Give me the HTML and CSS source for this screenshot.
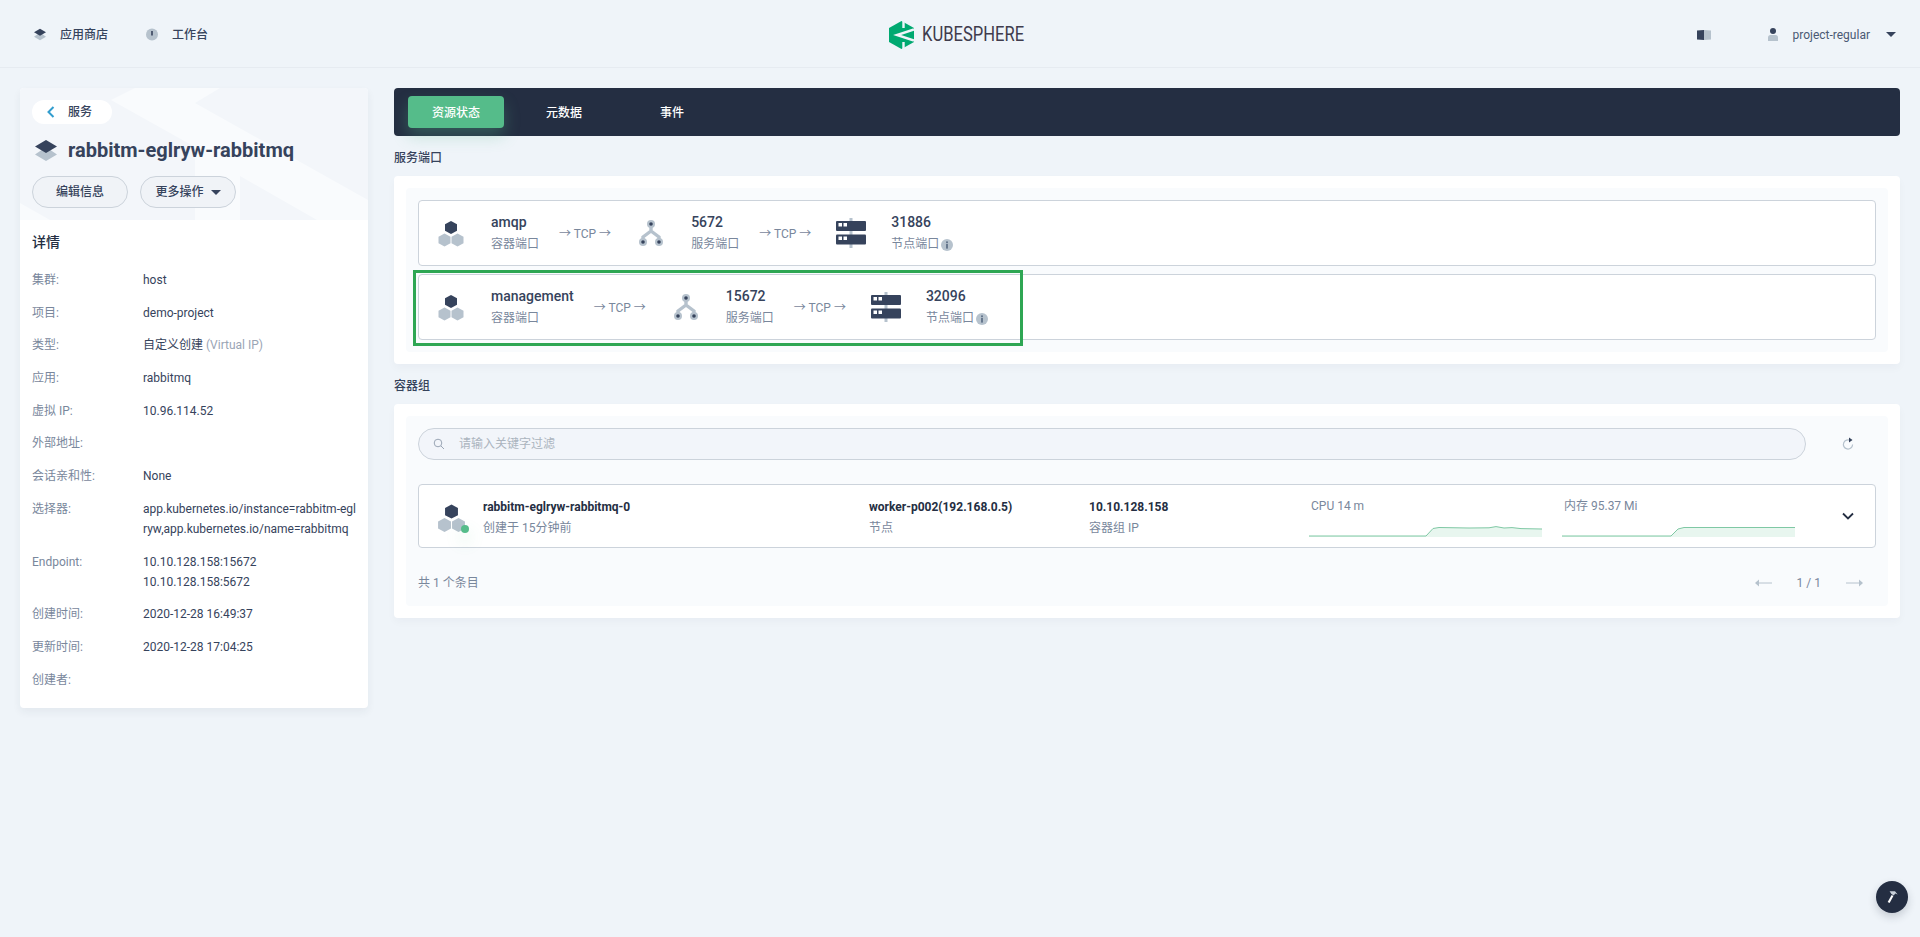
FILE: index.html
```html
<!DOCTYPE html>
<html lang="zh">
<head>
<meta charset="utf-8">
<title>KubeSphere</title>
<link rel="stylesheet" href="styles.css">
</head>
<body>
<svg class="defs" width="0" height="0" aria-hidden="true">
  <defs>
    <symbol id="stack" viewBox="0 0 22 21">
      <polygon class="f-light" points="11,7 22,14.5 11,21 0,14.5"/>
      <polygon class="f-dark" points="11,0 22,6.5 11,13 0,6.5"/>
    </symbol>
    <symbol id="hexes" viewBox="0 0 40 40">
      <polygon class="f-dark" points="20,8 26,11.2 26,17.8 20,21 14,17.8 14,11.2"/>
      <polygon class="f-light" points="13.5,20.5 19.5,23.7 19.5,30.3 13.5,33.5 7.5,30.3 7.5,23.7"/>
      <polygon class="f-light" points="26.5,20.5 32.5,23.7 32.5,30.3 26.5,33.5 20.5,30.3 20.5,23.7"/>
    </symbol>
    <symbol id="tree" viewBox="0 0 40 40">
      <path class="s-light" d="M20 11V18L12 24V29M20 18L28 24V29"/>
      <circle class="f-light" cx="20" cy="11" r="4"/><circle class="f-light" cx="12" cy="29" r="4"/><circle class="f-light" cx="28" cy="29" r="4"/>
      <circle class="f-dark" cx="20" cy="11" r="1.8"/><circle class="f-dark" cx="12" cy="29" r="1.8"/><circle class="f-dark" cx="28" cy="29" r="1.8"/>
    </symbol>
    <symbol id="server" viewBox="0 0 40 40">
      <rect class="f-light" x="18.5" y="5" width="3" height="30"/>
      <rect class="f-dark" x="5" y="8" width="30" height="10" rx="1"/>
      <rect class="f-dark" x="5" y="21.5" width="30" height="10" rx="1"/>
      <rect class="f-white" x="7.5" y="10" width="3.5" height="3.5"/><rect class="f-white" x="12.5" y="10" width="3.5" height="3.5"/>
      <rect class="f-white" x="7.5" y="23.5" width="3.5" height="3.5"/><rect class="f-white" x="12.5" y="23.5" width="3.5" height="3.5"/>
    </symbol>
    <symbol id="info" viewBox="0 0 12 12">
      <circle class="f-light" cx="6" cy="6" r="6"/>
      <rect class="f-mid" x="5.1" y="2.4" width="1.8" height="1.8"/>
      <rect class="f-mid" x="5.1" y="5" width="1.8" height="4.6"/>
    </symbol>
  </defs>
</svg>

<header class="topbar">
  <nav class="nav">
    <a class="nav-item"><svg class="nav-icon"><use href="#stack"/></svg>应用商店</a>
    <a class="nav-item">
      <svg class="nav-icon" viewBox="0 0 12 12"><circle class="f-light" cx="6" cy="6" r="6"/><rect class="f-dark" x="5.2" y="2.5" width="1.6" height="4.5"/></svg>工作台
    </a>
  </nav>
  <div class="logo">
    <svg class="logo-mark" viewBox="0 0 25 28">
      <polygon class="f-green" points="12.5,0 25,7 25,21 12.5,28 0,21 0,7"/>
      <path class="s-white-k" d="M14.5 0V7M14.5 21V28M25 8.5L8 14L25 19.5"/>
      <polygon class="f-green" points="25,13 25,15 21,14"/>
    </svg>
    <span class="logo-text">KUBESPHERE</span>
  </div>
  <div class="user-area">
    <svg class="book" viewBox="0 0 14 10"><path class="f-dark" d="M0 0.5L7 0V10L0 9.5Z"/><path class="f-light" d="M7 0L14 0.5V9.5L7 10Z"/></svg>
    <svg class="user-icon" viewBox="0 0 10 13"><circle class="f-dark" cx="5" cy="3" r="3"/><path class="f-light" d="M0 13V9.5Q0 7 2.5 7H7.5Q10 7 10 9.5V13Z"/></svg>
    <span class="user-name">project-regular</span>
    <span class="caret"></span>
  </div>
</header>

<main class="page">
  <aside class="side">
    <div class="side-head">
      <svg class="head-bg" viewBox="0 0 348 132" preserveAspectRatio="none" aria-hidden="true">
        <polygon class="f-bgshape" points="91,12 115,0 200,0 175,15 348,112 348,132 297,132 220,88 220,132 175,132 175,59"/>
        <polygon class="f-bgshape" points="0,115 30,132 0,132"/>
      </svg>
      <a class="back">
        <svg class="back-icon" viewBox="0 0 8 12"><path d="M6.5 1L1.5 6L6.5 11"/></svg>
        <span>服务</span>
      </a>
      <h1 class="title"><svg class="title-icon"><use href="#stack"/></svg>rabbitm-eglryw-rabbitmq</h1>
      <div class="actions">
        <button class="btn">编辑信息</button>
        <button class="btn">更多操作<span class="caret btn-caret"></span></button>
      </div>
    </div>
    <section class="details">
      <h2 class="details-title">详情</h2>
      <dl class="kv">
        <dt>集群:</dt><dd>host</dd>
        <dt>项目:</dt><dd>demo-project</dd>
        <dt>类型:</dt><dd>自定义创建 <span class="muted">(Virtual IP)</span></dd>
        <dt>应用:</dt><dd>rabbitmq</dd>
        <dt>虚拟 IP:</dt><dd>10.96.114.52</dd>
        <dt>外部地址:</dt><dd></dd>
        <dt>会话亲和性:</dt><dd>None</dd>
        <dt>选择器:</dt><dd>app.kubernetes.io/instance=rabbitm-eglryw,app.kubernetes.io/name=rabbitmq</dd>
        <dt>Endpoint:</dt><dd>10.10.128.158:15672<br>10.10.128.158:5672</dd>
        <dt>创建时间:</dt><dd>2020-12-28 16:49:37</dd>
        <dt>更新时间:</dt><dd>2020-12-28 17:04:25</dd>
        <dt>创建者:</dt><dd></dd>
      </dl>
    </section>
  </aside>

  <div class="content">
    <div class="tabs">
      <a class="tab tab-active">资源状态</a>
      <a class="tab">元数据</a>
      <a class="tab">事件</a>
    </div>

    <h3 class="section-label">服务端口</h3>
    <div class="card">
      <div class="panel ports">
        <div class="port-row">
          <svg class="port-icon"><use href="#hexes"/></svg>
          <div class="cell"><strong>amqp</strong><span>容器端口</span></div>
          <span class="tcp">→ TCP →</span>
          <svg class="port-icon"><use href="#tree"/></svg>
          <div class="cell"><strong>5672</strong><span>服务端口</span></div>
          <span class="tcp">→ TCP →</span>
          <svg class="port-icon"><use href="#server"/></svg>
          <div class="cell"><strong>31886</strong><span>节点端口<svg class="info"><use href="#info"/></svg></span></div>
        </div>
        <div class="port-row">
          <svg class="port-icon"><use href="#hexes"/></svg>
          <div class="cell"><strong>management</strong><span>容器端口</span></div>
          <span class="tcp">→ TCP →</span>
          <svg class="port-icon"><use href="#tree"/></svg>
          <div class="cell"><strong>15672</strong><span>服务端口</span></div>
          <span class="tcp">→ TCP →</span>
          <svg class="port-icon"><use href="#server"/></svg>
          <div class="cell"><strong>32096</strong><span>节点端口<svg class="info"><use href="#info"/></svg></span></div>
          <div class="highlight"></div>
        </div>
      </div>
    </div>

    <h3 class="section-label">容器组</h3>
    <div class="card">
      <div class="panel pods">
        <div class="toolbar">
          <div class="search">
            <svg class="search-icon" viewBox="0 0 12 12"><circle cx="5" cy="5" r="3.8"/><path d="M8 8L11 11"/></svg>
            <span>请输入关键字过滤</span>
          </div>
          <svg class="refresh" viewBox="0 0 12 14"><path class="s-refresh" d="M8.5 3.6A4.6 4.6 0 1 0 10.6 7.6"/><polygon class="f-dark" points="7,0.5 10.5,3 7,5.5"/></svg>
        </div>
        <div class="pod-row">
          <span class="pod-icon">
            <svg class="pod-hex"><use href="#hexes"/></svg>
            <i class="status-dot"></i>
          </span>
          <div class="cell pod-cell"><strong class="small">rabbitm-eglryw-rabbitmq-0</strong><span>创建于 15分钟前</span></div>
          <div class="cell pod-cell"><strong class="small">worker-p002(192.168.0.5)</strong><span>节点</span></div>
          <div class="cell pod-cell"><strong class="small">10.10.128.158</strong><span>容器组 IP</span></div>
          <div class="metric">
            <span>CPU 14 m</span>
            <svg class="spark" viewBox="0 0 233 11">
              <path class="spark-fill" d="M0 10H117L124 2.5L130 1.5L160 2L180 1.8L187 0.6L195 2L203 1.6L212 2.6L233 3V11H0Z"/>
              <path class="spark-line" d="M0 10H117L124 2.5L130 1.5L160 2L180 1.8L187 0.6L195 2L203 1.6L212 2.6L233 3"/>
            </svg>
          </div>
          <div class="metric">
            <span>内存 95.37 Mi</span>
            <svg class="spark" viewBox="0 0 233 11">
              <path class="spark-fill" d="M0 10H109L116 3L122 1.5H233V11H0Z"/>
              <path class="spark-line" d="M0 10H109L116 3L122 1.5H233"/>
            </svg>
          </div>
          <svg class="chevron" viewBox="0 0 12 8"><path d="M1 1.5L6 6.5L11 1.5"/></svg>
        </div>
        <div class="pager">
          <span class="total">共 1 个条目</span>
          <div class="pager-nav">
            <svg class="arrow" viewBox="0 0 17 10"><path class="s-arrow" d="M3 5H17"/><polygon class="f-arrow" points="0,5 4,1.5 4,8.5"/></svg>
            <span>1 / 1</span>
            <svg class="arrow" viewBox="0 0 17 10"><path class="s-arrow" d="M0 5H14"/><polygon class="f-arrow" points="17,5 13,1.5 13,8.5"/></svg>
          </div>
        </div>
      </div>
    </div>
  </div>
</main>

<button class="help" aria-label="工具箱">
  <svg viewBox="0 0 16 16">
    <path class="f-light-soft" d="M5.6 2.2H11L13.6 5.4L11.2 4.4L9.8 6.6L7.4 5Z"/>
    <path class="f-white" d="M7.6 6L9.4 7.1L5.6 14L3.7 12.9Z"/>
  </svg>
</button>
</body>
</html>
```

FILE: styles.css
```css
* { box-sizing: border-box; }
html, body { margin: 0; height: 100%; }
body {
  background: #eff4f9;
  color: #36435c;
  font: 12px/20px Roboto, "Noto Sans CJK SC", sans-serif;
  overflow: hidden;
  position: relative;
}
.defs { position: absolute; }

.f-dark { fill: #36435c; }
.f-light { fill: #b6c2cd; }
.f-light-soft { fill: #c8d0d9; }
.f-mid { fill: #5f7088; }
.f-white { fill: #fff; }
.f-green { fill: #00a971; }
.f-bgshape { fill: #f9fbfd; }
.s-light { fill: none; stroke: #b6c2cd; stroke-width: 3.4; }

/* top bar */
.topbar {
  height: 68px;
  display: grid;
  grid-template-columns: 1fr auto 1fr;
  align-items: center;
  border-bottom: 1px solid #e6ebf1;
  padding: 2px 24px 0 34px;
}
.nav { display: flex; gap: 38px; }
.nav-item { display: flex; align-items: center; gap: 14px; font-weight: 500; color: #36435c; }
.nav-icon { width: 12px; height: 13px; }
.logo { display: flex; align-items: center; gap: 8px; margin-right: 18px; }
.logo-mark { width: 25px; height: 28px; }
.s-white-k { fill: none; stroke: #eff4f9; stroke-width: 2.4; }
.logo-text {
  width: 101px;
  font-size: 19.5px;
  line-height: 28px;
  color: #3f3c4d;
  transform: scaleX(.85);
  transform-origin: left center;
  white-space: nowrap;
}
.user-area { display: flex; align-items: center; justify-content: flex-end; }
.book { width: 14px; height: 10px; margin-right: 57px; }
.user-icon { width: 10px; height: 13px; margin-right: 15px; }
.user-name { color: #4a5974; margin-right: 16px; }
.caret {
  display: inline-block;
  width: 0; height: 0;
  border-left: 5px solid transparent;
  border-right: 5px solid transparent;
  border-top: 5px solid #36435c;
}

/* page */
.page {
  display: flex;
  align-items: flex-start;
  gap: 26px;
  padding: 20px 20px 0;
}

/* side */
.side {
  width: 348px;
  flex: none;
  background: #fff;
  border-radius: 4px;
  box-shadow: 0 4px 8px rgba(36, 46, 66, .06);
  overflow: hidden;
}
.side-head {
  position: relative;
  background: #f3f6fa;
  padding: 12px;
  height: 132px;
}
.head-bg { position: absolute; inset: 0; width: 100%; height: 100%; }
.back {
  position: relative;
  display: flex;
  align-items: center;
  width: 80px;
  height: 24px;
  background: #fff;
  border-radius: 12px;
  padding-left: 15px;
  font-weight: 500;
  gap: 13px;
}
.back-icon { width: 8px; height: 12px; fill: none; stroke: #329dce; stroke-width: 2; }
.title {
  position: relative;
  margin: 12px 0 0;
  display: flex;
  align-items: center;
  gap: 11px;
  font-size: 20px;
  line-height: 28px;
  font-weight: 700;
  color: #36435c;
  padding-left: 3px;
}
.title-icon { width: 22px; height: 21px; }
.actions { position: relative; display: flex; gap: 12px; margin-top: 12px; }
.btn {
  width: 96px;
  height: 32px;
  border: 1px solid #ccd3db;
  border-radius: 16px;
  background: #f0f3f7;
  color: #36435c;
  font: 500 12px/20px Roboto, "Noto Sans CJK SC", sans-serif;
  padding: 0;
  display: inline-flex;
  align-items: center;
  justify-content: center;
}
.btn-caret { margin-left: 7px; }

.details { padding: 12px 12px 18px; }
.details-title { margin: 0 0 18px; font-size: 14px; line-height: 20px; font-weight: 500; color: #242e42; }
.kv {
  margin: 0;
  display: grid;
  grid-template-columns: 111px 1fr;
  row-gap: 12.7px;
}
.kv dt { color: #79879c; }
.kv dd { margin: 0; min-height: 20px; color: #36435c; word-break: break-all; }
.muted { color: #9aa5b5; }

/* content */
.content { flex: 1; min-width: 0; }
.tabs {
  display: flex;
  gap: 12px;
  height: 48px;
  background: #242e42;
  border-radius: 4px;
  padding: 8px 14px;
}
.tab {
  width: 96px;
  height: 32px;
  border-radius: 4px;
  color: #fff;
  line-height: 34px;
  text-align: center;
  font-weight: 500;
}
.tab-active { background: #55bc8a; box-shadow: 0 8px 16px rgba(85, 188, 138, .3); }
.section-label { margin: 12px 0 8px; font-size: 12px; line-height: 20px; font-weight: 500; color: #36435c; }
.card {
  background: #fff;
  border-radius: 4px;
  padding: 12px;
  box-shadow: 0 4px 8px rgba(36, 46, 66, .03);
}
.panel { background: #f9fbfd; border-radius: 4px; padding: 12px; }
.ports { display: flex; flex-direction: column; gap: 8px; }
.port-row {
  position: relative;
  display: flex;
  align-items: center;
  gap: 20px;
  height: 66px;
  padding-left: 12px;
  background: #fff;
  border: 1px solid #ccd3db;
  border-radius: 4px;
}
.port-icon { width: 40px; height: 40px; flex: none; }
.cell { display: flex; flex-direction: column; gap: 2px; }
.cell strong { font-size: 14px; line-height: 20px; font-weight: 500; color: #36435c; white-space: nowrap; }
.cell strong.small { font-size: 12px; font-weight: 700; color: #242e42; }
.cell span { display: flex; align-items: center; color: #79879c; white-space: nowrap; }
.pod-cell { padding-top: 3px; gap: 1px; }
.tcp { color: #79879c; white-space: nowrap; padding-top: 2px; }
.info { width: 12px; height: 12px; margin: 2px 0 0 2px; }
.highlight {
  position: absolute;
  left: -6px;
  top: -5px;
  width: 610px;
  height: 76px;
  border: 3px solid #2ea653;
  pointer-events: none;
}

/* pods */
.pods { padding-bottom: 13px; }
.toolbar { display: flex; align-items: center; gap: 36px; padding-right: 22px; }
.search {
  flex: 1;
  height: 32px;
  display: flex;
  align-items: center;
  gap: 14px;
  padding-left: 14px;
  background: #f2f5fa;
  border: 1px solid #ccd3db;
  border-radius: 16px;
  color: #abb4be;
}
.search-icon { width: 12px; height: 12px; fill: none; stroke: #9aa5b5; stroke-width: 1; }
.refresh { width: 12px; height: 14px; flex: none; }
.s-refresh { fill: none; stroke: #b6c2cd; stroke-width: 1.2; }
.pod-row {
  margin-top: 24px;
  height: 64px;
  display: grid;
  grid-template-columns: 46px 386px 220px 220px 253px 233px 1fr;
  align-items: center;
  padding-left: 18px;
  background: #fff;
  border: 1px solid #ccd3db;
  border-radius: 4px;
}
.pod-icon { position: relative; display: block; width: 34px; height: 34px; }
.pod-hex { width: 43px; height: 43px; margin: -3px 0 0 -7px; display: block; }
.status-dot {
  position: absolute;
  left: 24px;
  top: 26px;
  width: 8px;
  height: 8px;
  border-radius: 50%;
  background: #55bc8a;
  box-shadow: 0 8px 16px rgba(85, 188, 138, .3);
}
.metric { display: flex; flex-direction: column; gap: 10px; align-self: start; padding-top: 11px; }
.metric > span { color: #79879c; padding-left: 2px; }
.spark { width: 233px; height: 11px; display: block; }
.spark-fill { fill: #e8f6ef; }
.spark-line { fill: none; stroke: #7fc8a4; stroke-width: 1; }
.chevron { width: 12px; height: 8px; justify-self: center; fill: none; stroke: #242e42; stroke-width: 1.8; margin-left: 26px; }
.pager { display: flex; justify-content: space-between; align-items: center; margin-top: 25px; }
.total { color: #79879c; }
.pager-nav { display: flex; align-items: center; gap: 25px; margin-right: 13px; color: #79879c; }
.arrow { width: 17px; height: 10px; }
.s-arrow { fill: none; stroke: #b6c2cd; stroke-width: 1; }
.f-arrow { fill: #b6c2cd; }

/* floating help */
.help {
  position: absolute;
  right: 12px;
  bottom: 24px;
  width: 32px;
  height: 32px;
  padding: 8px;
  border: 0;
  border-radius: 50%;
  background: #242e42;
  box-shadow: 0 4px 8px rgba(36, 46, 66, .2);
}
.help svg { display: block; width: 16px; height: 16px; }
```
